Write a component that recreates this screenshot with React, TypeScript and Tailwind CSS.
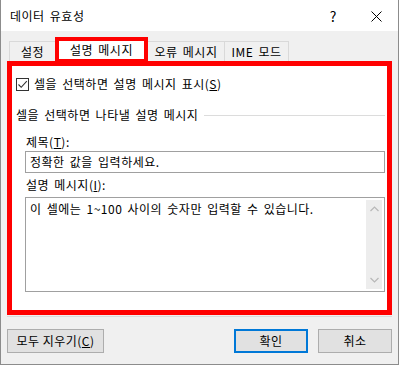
const font = { fontFamily: '"Noto Sans CJK KR", "Noto Sans", sans-serif' };

function CloseIcon() {
  return (
    <svg width="11" height="11" viewBox="0 0 11 11" fill="none" stroke="#000" strokeWidth="1">
      <path d="M0.5 0.5 L10.5 10.5 M10.5 0.5 L0.5 10.5" />
    </svg>
  );
}

function Chevron({ up }: { up?: boolean }) {
  return (
    <svg width="9" height="6" viewBox="0 0 9 6" fill="none" stroke="#b8b8b8" strokeWidth="1.2">
      <path d={up ? "M0.5 5 L4.5 1 L8.5 5" : "M0.5 1 L4.5 5 L8.5 1"} />
    </svg>
  );
}

export default function App() {
  return (
    <div
      className="w-[399px] h-[365px] bg-[#f0f0f0] border-l border-r border-b border-[#8c8c8c] flex flex-col text-[12px] text-black leading-[16px] tracking-[0.5px] [word-spacing:2px]"
      style={font}
    >
      {/* Title bar */}
      <div className="h-[31px] bg-white flex items-center shrink-0">
        <span className="ml-[9px]">데이터 유효성</span>
        <span className="ml-auto mr-[34px] text-[14px]">?</span>
        <span className="mr-[16px] mt-[1px]">
          <CloseIcon />
        </span>
      </div>

      {/* Tabs */}
      <div className="h-[30px] flex items-end pl-[8px] shrink-0">
        <div className="h-[20px] w-[46px] border-l border-t border-[#d9d9d9] flex items-center justify-center pt-[1px]">
          설정
        </div>
        <div className="relative z-10 -mb-[2px] h-[26px] w-[93px] border-4 border-[#ff0000] bg-white flex items-center justify-center pb-[1px]">
          설명 메시지
        </div>
        <div className="h-[20px] w-[77px] border-t border-r border-[#d9d9d9] flex items-center justify-center pt-[1px]">
          오류 메시지
        </div>
        <div className="h-[20px] w-[64px] border-t border-r border-[#d9d9d9] flex items-center justify-center pt-[1px]">
          IME 모드
        </div>
      </div>

      {/* Content panel */}
      <div className="mx-[6px] h-[254px] border-[5px] border-[#ff0000] bg-white shrink-0 flex flex-col">
        <div className="flex items-center mt-[10px] ml-[4px]">
          <div className="w-[13px] h-[13px] border border-[#333] bg-white flex items-center justify-center">
            <svg width="11" height="11" viewBox="0 0 11 11" fill="none" stroke="#333" strokeWidth="1.1">
              <path d="M1.5 5.5 L4.2 8.3 L9.8 2.2" />
            </svg>
          </div>
          <span className="ml-[5px]">
            셀을 선택하면 설명 메시지 표시(<span className="underline">S</span>)
          </span>
        </div>

        <div className="flex items-center mt-[15px] pl-[4px] pr-[2px]">
          <span>셀을 선택하면 나타낼 설명 메시지</span>
          <div className="flex-1 h-px bg-[#dcdcdc] ml-[6px] mt-[1px]" />
        </div>

        <div className="mt-[11px] pl-[14px]">
          제목(<span className="underline">T</span>):
        </div>
        <div className="mt-[1px] ml-[13px] w-[360px] h-[22px] border border-[#a0a0a0] flex items-center pl-[4px]">
          정확한 값을 입력하세요.
        </div>

        <div className="mt-[4px] pl-[14px]">
          설명 메시지(<span className="underline">I</span>):
        </div>
        <div className="mt-[4px] ml-[13px] w-[360px] h-[95px] border border-[#a0a0a0] flex">
          <div className="flex-1 pl-[4px] pt-[3px]">이 셀에는 1~100 사이의 숫자만 입력할 수 있습니다.</div>
          <div className="w-[16px] my-[2px] mr-[2px] bg-[#ededed] flex flex-col items-center justify-between py-[6px]">
            <Chevron up />
            <Chevron />
          </div>
        </div>
      </div>
      <div className="mx-[6px] mt-[1px] h-px bg-[#dadada] shrink-0" />

      {/* Buttons */}
      <div className="flex items-center mt-[12px] px-[6px]">
        <button className="w-[97px] h-[24px] bg-[#e1e1e1] border border-[#adadad] flex items-center justify-center">
          모두 지우기(<span className="underline">C</span>)
        </button>
        <button className="ml-auto w-[74px] h-[24px] bg-[#e1e1e1] border-2 border-[#0078d7] flex items-center justify-center">
          확인
        </button>
        <button className="ml-[10px] w-[74px] h-[24px] bg-[#e1e1e1] border border-[#adadad] flex items-center justify-center">
          취소
        </button>
      </div>
    </div>
  );
}
